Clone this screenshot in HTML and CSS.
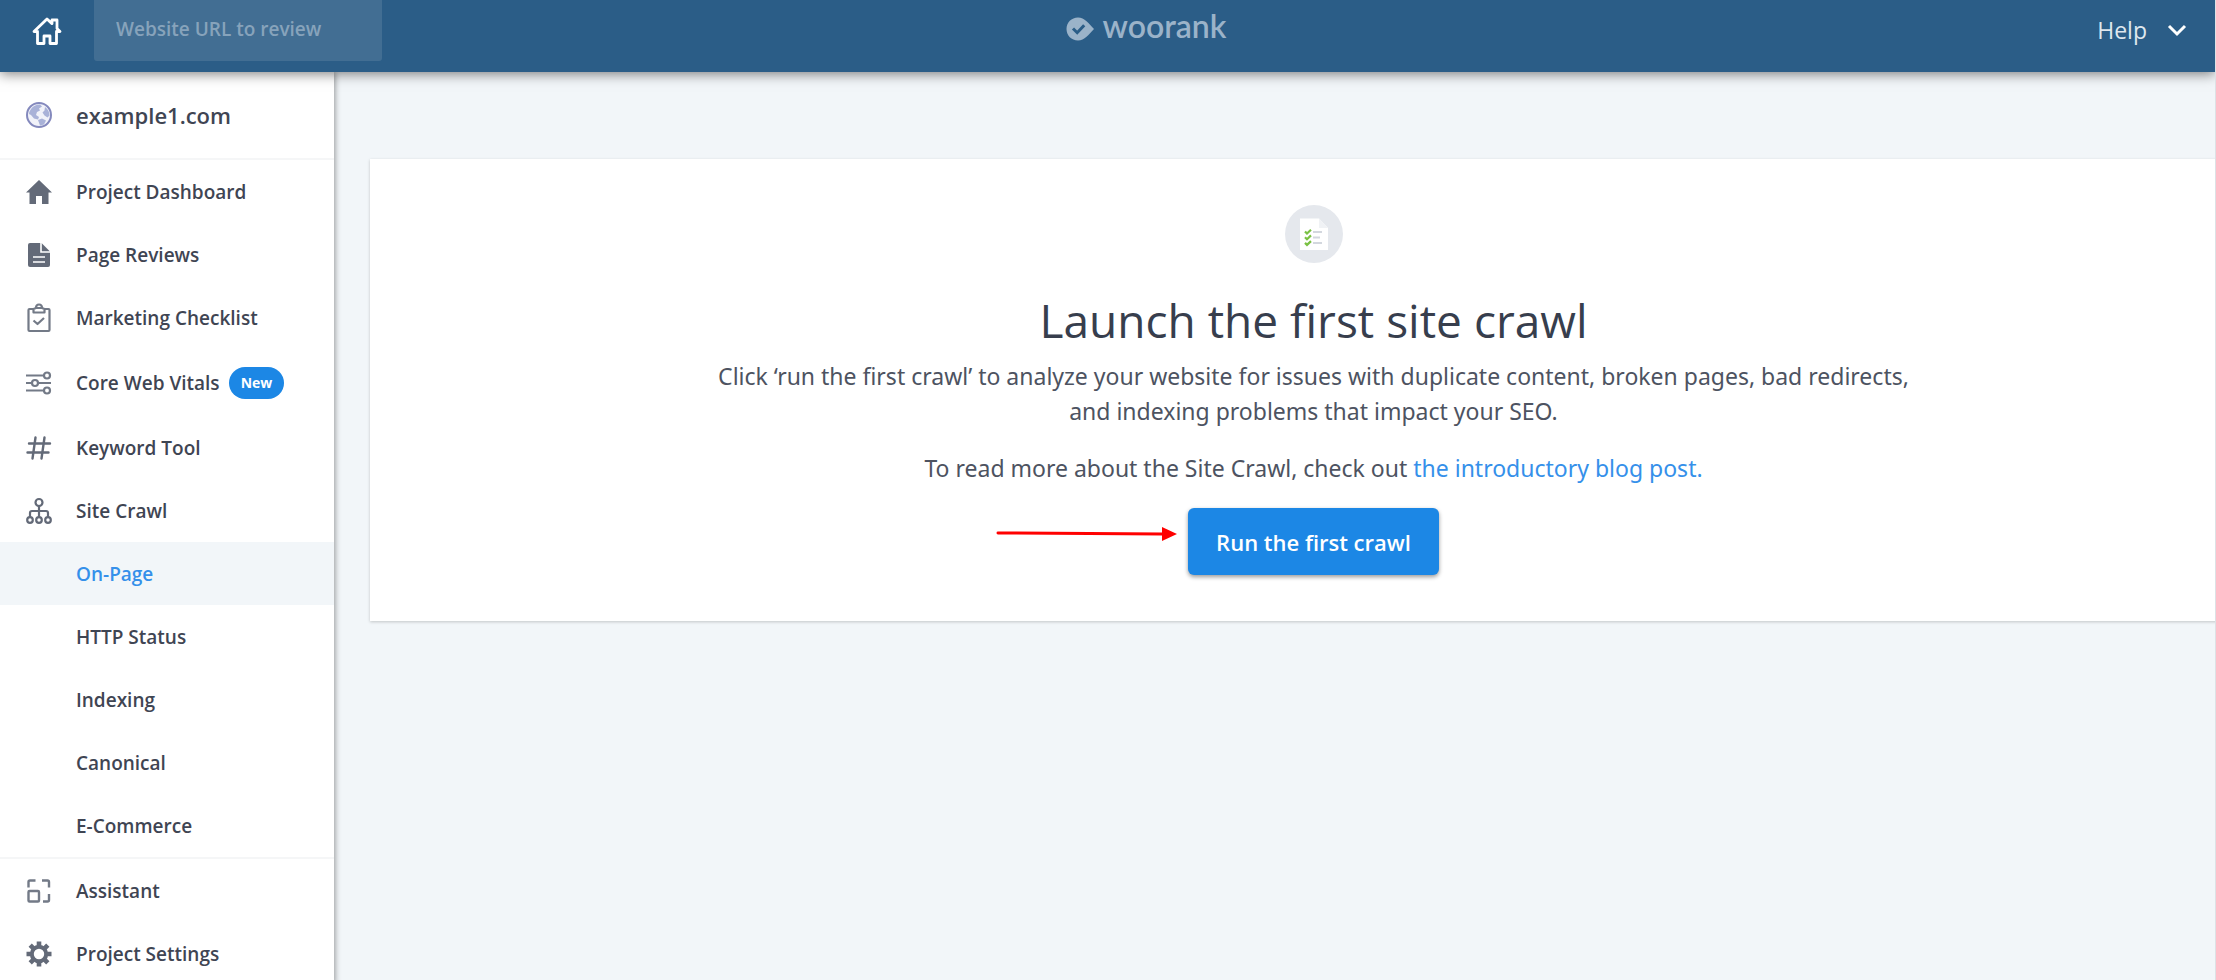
FILE: index.html
```html
<!DOCTYPE html>
<html lang="en">
<head>
    <meta charset="UTF-8">
    <meta name="viewport" content="width=device-width, initial-scale=1.0">
    <title>Site Crawl - WooRank</title>
    <link rel="stylesheet" href="styles.css">
</head>
<body>
    <header class="topbar">
        <div class="topbar-left">
            <a class="home-link" href="#" aria-label="Home">
                <svg width="30" height="30" viewBox="0 0 30 30" fill="none" stroke="#fff" stroke-width="2.800" stroke-linejoin="round" stroke-linecap="round">
                    <path d="M2 15.500 15 3l5 4.600V4h5v8.500l3 3h-3.500V27.500h-6.500V20h-6v7.500H5.500V15.500z"/>
                </svg>
            </a>
            <input class="url-input" type="text" aria-label="Website URL to review" placeholder="Website URL to review">
        </div>
        <a class="logo" href="#">
            <svg width="28" height="24" viewBox="0 0 28 24">
                <path fill="#9bb3c9" d="M12 0.500C5.500 0.500 0.500 5.500 0.500 12S5.500 23.500 12 23.500c6.500 0 11-6 16-11.500C23 6.500 18.500 0.500 12 0.500z"/>
                <path fill="none" stroke="#2b5d87" stroke-width="3" d="M7 11.500l4.200 4.200 7-7.500"/>
            </svg>
            <span>woorank</span>
        </a>
        <button class="help-btn" type="button">
            Help
            <svg width="20" height="14" viewBox="0 0 20 14" fill="none" stroke="#fff" stroke-width="3">
                <path d="M2 3l8 8 8-8"/>
            </svg>
        </button>
    </header>

    <div class="layout">
        <nav class="sidebar">
            <a class="project" href="#">
                <svg width="28" height="28" viewBox="0 0 28 28">
                    <circle cx="14" cy="14" r="12" fill="#f1f2f9" stroke="#8489bd" stroke-width="2"/>
                    <path fill="#a9b2d8" d="M6 8c2-3 5-4.500 9-4.500l2 2-3 2 1 2-3 1.500-1 3 3 2-1 2.500-4-1-3-3.500-2-1c0-2 1-3.500 2-5z"/>
                    <path fill="#a9b2d8" d="M20 6c3 2 4.500 5 4.500 8.500l-2 2-3-2-2-3 2-2zM13 19l4-1.500 4 2-2 4-4 1z"/>
                </svg>
                example1.com
            </a>
            <ul class="menu">
                <li><a href="#">
                    <svg width="28" height="28" viewBox="0 0 28 28" fill="#636a78">
                        <path d="M14 2 1 14.500h3.500V26H11v-8h6v8h6.500V14.500H27z"/>
                    </svg>
                    Project Dashboard
                </a></li>
                <li><a href="#">
                    <svg width="28" height="28" viewBox="0 0 28 28">
                        <path fill="#636a78" d="M5 2h11.500L25 10.500V24a2 2 0 0 1-2 2H5a2 2 0 0 1-2-2V4a2 2 0 0 1 2-2z"/>
                        <path fill="none" stroke="#fff" stroke-width="1.600" d="M16 2v9h9M8 16h12M8 21h12"/>
                    </svg>
                    Page Reviews
                </a></li>
                <li><a href="#">
                    <svg width="28" height="30" viewBox="0 0 28 30" fill="none" stroke="#737a87" stroke-width="2.200" stroke-linejoin="round">
                        <path d="M8 6H4.500a1 1 0 0 0-1 1v20a1 1 0 0 0 1 1h19a1 1 0 0 0 1-1V7a1 1 0 0 0-1-1H20"/>
                        <path d="M8.500 9.500V6l2.500-1c0-2 1.300-3.500 3-3.500s3 1.500 3 3.500l2.500 1v3.500zM11 5h6M8.500 17.500l4 3.500 6.500-6"/>
                    </svg>
                    Marketing Checklist
                </a></li>
                <li class="has-badge"><a href="#">
                    <svg width="28" height="28" viewBox="0 0 28 28" fill="none" stroke="#737a87" stroke-width="2.200">
                        <path d="M1 6.500h18M1 14h6M13 14h13M1 21.500h18"/>
                        <circle cx="22" cy="6.500" r="3"/>
                        <circle cx="10" cy="14" r="3"/>
                        <circle cx="22" cy="21.500" r="3"/>
                    </svg>
                    Core Web Vitals <span class="badge">New</span>
                </a></li>
                <li><a href="#">
                    <svg width="28" height="28" viewBox="0 0 28 28" fill="none" stroke="#636a78" stroke-width="2.400" stroke-linecap="round">
                        <path d="M10.500 3.500 7.500 24.500M19.500 3.500 16.500 24.500M4 9.500h21M2.500 18.500h21"/>
                    </svg>
                    Keyword Tool
                </a></li>
                <li><a href="#">
                    <svg width="28" height="28" viewBox="0 0 28 28" fill="none" stroke="#636a78" stroke-width="2.200">
                        <circle cx="14" cy="5.500" r="3.500"/>
                        <path d="M14 9v11M5 20v-4a2 2 0 0 1 2-2h14a2 2 0 0 1 2 2v4"/>
                        <circle cx="5" cy="23" r="2.800"/>
                        <circle cx="14" cy="23" r="2.800"/>
                        <circle cx="23" cy="23" r="2.800"/>
                    </svg>
                    Site Crawl
                </a>
                    <ul class="submenu">
                        <li><a class="active" href="#">On-Page</a></li>
                        <li><a href="#">HTTP Status</a></li>
                        <li><a href="#">Indexing</a></li>
                        <li><a href="#">Canonical</a></li>
                        <li><a href="#">E-Commerce</a></li>
                    </ul>
                </li>
            </ul>
            <ul class="menu">
                <li><a href="#">
                    <svg width="28" height="28" viewBox="0 0 28 28" fill="none" stroke="#737a87" stroke-width="2.400">
                        <rect x="3.500" y="14" width="10.500" height="10.500" rx="1"/>
                        <path d="M3.500 10.500V5a1.500 1.500 0 0 1 1.500-1.500h5.500M17 3.500h5.500A1.500 1.500 0 0 1 24 5v5.500M24 17v6a1.500 1.500 0 0 1-1.500 1.500H18"/>
                    </svg>
                    Assistant
                </a></li>
                <li><a href="#">
                    <svg width="28" height="28" viewBox="0 0 28 28" fill="none" stroke="#636a78">
                        <circle cx="14" cy="14" r="7.200" stroke-width="4"/>
                        <path stroke-width="4.600" d="M14 1.500v5M14 21.500v5M1.500 14h5M21.500 14h5M5.200 5.200l3.500 3.500M19.300 19.300l3.500 3.500M5.200 22.800l3.500-3.500M19.300 8.700l3.500-3.500"/>
                    </svg>
                    Project Settings
                </a></li>
            </ul>
        </nav>

        <main class="content">
            <section class="card">
                <svg class="card-icon" width="58" height="58" viewBox="0 0 58 58">
                    <circle cx="29" cy="29" r="29" fill="#e5e8ed"/>
                    <path fill="#fff" d="M15 13.500h19l9 9.500v22H15z"/>
                    <path fill="#f0f2f5" d="M34 13.500l9 9.500h-9z"/>
                    <path fill="none" stroke="#d3d7de" stroke-width="2.200" d="M28 27h9M28 32.500h7M28 38h9"/>
                    <path fill="none" stroke="#7ac143" stroke-width="2.200" d="M20 26.500l2 2 4-3.800M20 32.200l2 2 4-3.800M20 37.900l2 2 4-3.800"/>
                </svg>
                <h1>Launch the first site crawl</h1>
                <p>Click ‘run the first crawl’ to analyze your website for issues with duplicate content, broken pages, bad redirects,<br>and indexing problems that impact your SEO.</p>
                <p>To read more about the Site Crawl, check out <a href="#">the introductory blog post.</a></p>
                <div class="action">
                    <svg class="arrow" width="182" height="16" viewBox="0 0 182 16">
                        <path stroke="#f00" stroke-width="3" stroke-linecap="round" d="M2 7l164 1"/>
                        <path fill="#f00" d="M166 1l15 7-15 7z"/>
                    </svg>
                    <button class="run-btn" type="button">Run the first crawl</button>
                </div>
            </section>
        </main>
    </div>
</body>
</html>
```

FILE: styles.css
```css
* {
    box-sizing: border-box;
}

body {
    margin: 0;
    height: 100vh;
    display: flex;
    flex-direction: column;
    background: #f2f6f9;
    border-right: 1px solid #dde1e5;
    color: #3f4553;
    font-family: "Open Sans", "Noto Sans", sans-serif;
    overflow: hidden;
}

a {
    color: inherit;
    text-decoration: none;
}

ul {
    list-style: none;
    margin: 0;
    padding: 0;
}

svg {
    display: block;
    flex-shrink: 0;
}

/* top bar */
.topbar {
    position: relative;
    z-index: 2;
    height: 72px;
    flex-shrink: 0;
    display: grid;
    grid-template-columns: 1fr auto 1fr;
    background: #2b5d87;
    box-shadow: 0 2px 12px rgba(0, 0, 0, 0.5);
}

.topbar-left {
    display: flex;
    align-items: flex-start;
}

.home-link {
    width: 94px;
    height: 61px;
    display: flex;
    justify-content: center;
    align-items: center;
}

.url-input {
    width: 288px;
    height: 61px;
    padding: 0 22px 3px;
    border: none;
    border-radius: 0 0 3px 3px;
    background: #426e93;
    color: #fff;
    font: 600 19px "Open Sans", "Noto Sans", sans-serif;
    outline: none;
}

.url-input::placeholder {
    color: #87a3bb;
    opacity: 1;
}

.logo {
    height: 57px;
    padding-left: 78px;
    display: flex;
    align-items: center;
    gap: 8px;
    color: #9bb3c9;
    font: 600 32px/32px Lato, sans-serif;
}

.logo span {
    padding-bottom: 6px;
}

.help-btn {
    justify-self: end;
    height: 60px;
    padding: 0 28px;
    display: flex;
    align-items: center;
    gap: 20px;
    border: none;
    background: none;
    color: #dfe7ee;
    font: 400 23px "Open Sans", "Noto Sans", sans-serif;
    cursor: pointer;
}

/* page */
.layout {
    flex: 1;
    display: flex;
}

.sidebar {
    width: 334px;
    flex-shrink: 0;
    background: #fff;
    box-shadow: 1px 0 6px rgba(0, 0, 0, 0.4);
}

.project {
    height: 86px;
    padding-left: 25px;
    display: flex;
    align-items: center;
    gap: 23px;
    font-size: 22px;
    font-weight: 600;
}

.menu {
    border-top: 2px solid #f5f6f7;
}

.menu a {
    height: 63px;
    padding-left: 25px;
    display: flex;
    align-items: center;
    gap: 23px;
    font-size: 19px;
    font-weight: 600;
}

.menu .has-badge a {
    height: 67px;
}

.badge {
    height: 32px;
    margin-left: -14px;
    padding: 0 12px;
    border-radius: 16px;
    background: #1c87e5;
    color: #fff;
    font-size: 14px;
    line-height: 32px;
    font-weight: 700;
}

.menu .submenu a {
    padding-left: 76px;
}

.submenu .active {
    background: #f2f6f9;
    color: #3590ea;
}

.content {
    flex: 1;
    min-width: 0;
    padding-top: 87px;
    padding-left: 36px;
    overflow: hidden;
}

/* the card runs past the right edge of the window */
.card {
    margin-right: -42px;
    padding: 46px 24px;
    display: flex;
    flex-direction: column;
    align-items: center;
    background: #fff;
    box-shadow: 0 1px 3px rgba(0, 0, 0, 0.2);
    text-align: center;
}

.card h1 {
    margin: 26px 0 8px;
    color: #373e4d;
    font-size: 46px;
    line-height: 62px;
    font-weight: 400;
}

.card p {
    margin: 0 0 22px;
    color: #4d5361;
    font-family: "Noto Sans", "Open Sans", sans-serif;
    font-size: 23px;
    line-height: 35px;
}

.card p a {
    color: #3590ea;
}

.action {
    position: relative;
}

.arrow {
    position: absolute;
    top: 18px;
    right: 100%;
    margin-right: 10px;
}

.run-btn {
    height: 67px;
    padding: 0 28px;
    border: none;
    border-radius: 6px;
    background: #1c87e5;
    color: #fff;
    box-shadow: 0 2px 4px rgba(0, 0, 0, 0.4);
    font: 600 22px "Open Sans", "Noto Sans", sans-serif;
    cursor: pointer;
}
```
